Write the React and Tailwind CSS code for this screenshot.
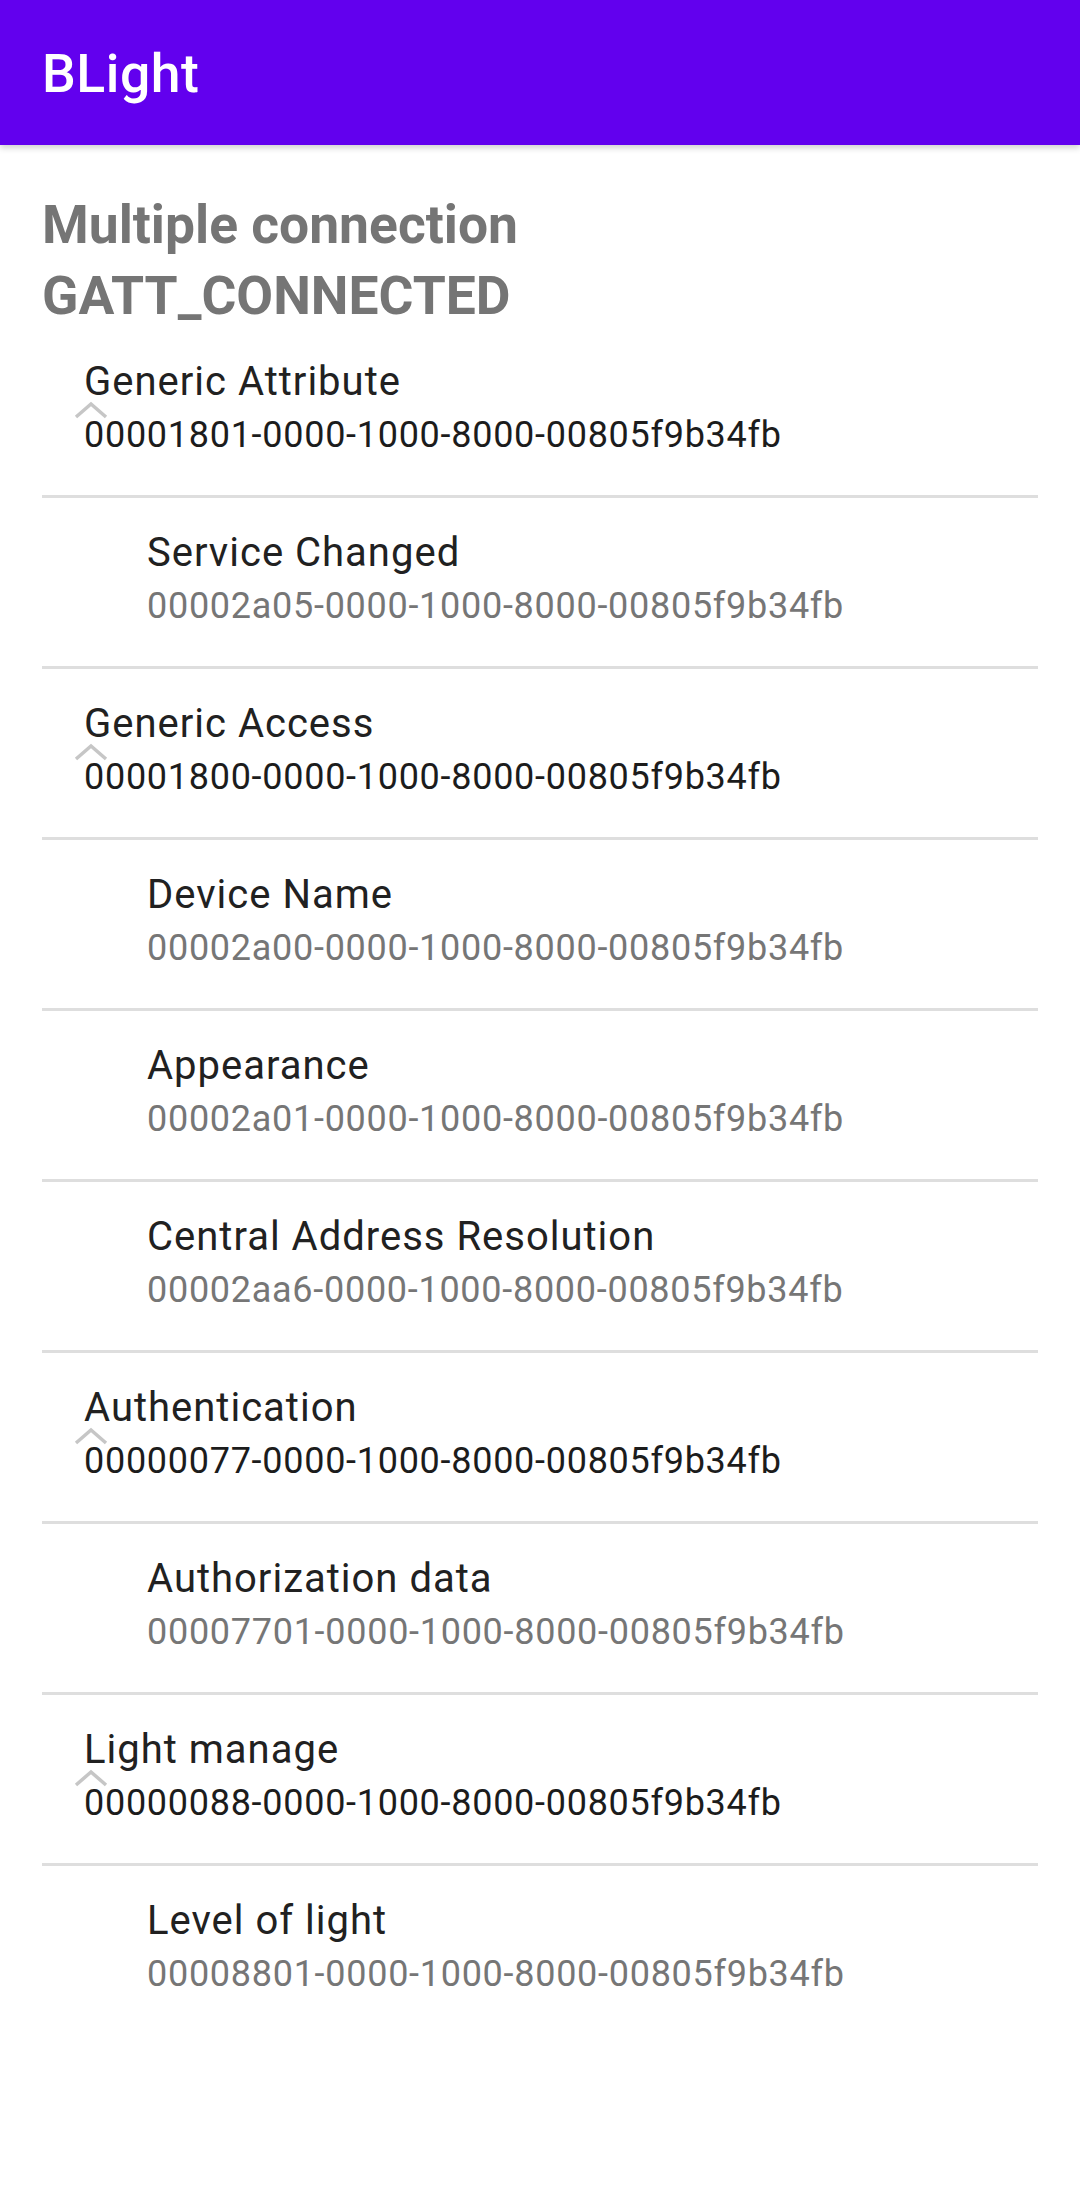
import React from 'react';

const services = [
  {
    name: 'Generic Attribute',
    uuid: '00001801-0000-1000-8000-00805f9b34fb',
    chars: [{ name: 'Service Changed', uuid: '00002a05-0000-1000-8000-00805f9b34fb' }],
  },
  {
    name: 'Generic Access',
    uuid: '00001800-0000-1000-8000-00805f9b34fb',
    chars: [
      { name: 'Device Name', uuid: '00002a00-0000-1000-8000-00805f9b34fb' },
      { name: 'Appearance', uuid: '00002a01-0000-1000-8000-00805f9b34fb' },
      { name: 'Central Address Resolution', uuid: '00002aa6-0000-1000-8000-00805f9b34fb' },
    ],
  },
  {
    name: 'Authentication',
    uuid: '00000077-0000-1000-8000-00805f9b34fb',
    chars: [{ name: 'Authorization data', uuid: '00007701-0000-1000-8000-00805f9b34fb' }],
  },
  {
    name: 'Light manage',
    uuid: '00000088-0000-1000-8000-00805f9b34fb',
    chars: [{ name: 'Level of light', uuid: '00008801-0000-1000-8000-00805f9b34fb' }],
  },
];

function Chevron() {
  return (
    <svg
      className="absolute left-[32px] top-[74px]"
      width="34"
      height="18"
      viewBox="0 0 34 18"
      fill="none"
    >
      <path d="M2 16 L17 3 L32 16" stroke="#c6c6c6" strokeWidth="3.5" />
    </svg>
  );
}

function Row({ title, uuid, group, last }) {
  return (
    <div
      className={`relative h-[171px] pt-[31px] ${group ? 'pl-[42px]' : 'pl-[105px]'} ${
        last ? '' : 'border-b-[3px] border-[#dedede]'
      }`}
    >
      {group && <Chevron />}
      <div className="text-[40px] leading-[47px] text-[#212121] tracking-[0.025em]">{title}</div>
      <div
        className={`mt-[10px] text-[36px] leading-[41px] tracking-[0.02em] ${
          group ? 'text-[#1c1c1c]' : 'text-[#767676]'
        }`}
      >
        {uuid}
      </div>
    </div>
  );
}

export default function App() {
  const rows = [];
  services.forEach((s) => {
    rows.push({ title: s.name, uuid: s.uuid, group: true });
    s.chars.forEach((c) => rows.push({ title: c.name, uuid: c.uuid, group: false }));
  });

  return (
    <div className="min-h-[2205px] bg-white font-['Roboto',sans-serif]">
      <div className="relative z-10 h-[145px] bg-[#6200ee] flex items-center pl-[42px] pt-[4px] shadow-[0_3px_6px_rgba(0,0,0,0.18)]">
        <span className="text-[53.5px] font-medium text-white tracking-[0.01em]">BLight</span>
      </div>

      <div className="px-[42px] pt-[44px]">
        <div className="text-[53.4px] leading-[71px] font-bold text-[#757575] -mb-[4px]">
          Multiple connection
          <br />
          GATT_CONNECTED
        </div>
      </div>

      <div className="mx-[42px]">
        {rows.map((r, i) => (
          <Row key={i} {...r} last={i === rows.length - 1} />
        ))}
      </div>
    </div>
  );
}
